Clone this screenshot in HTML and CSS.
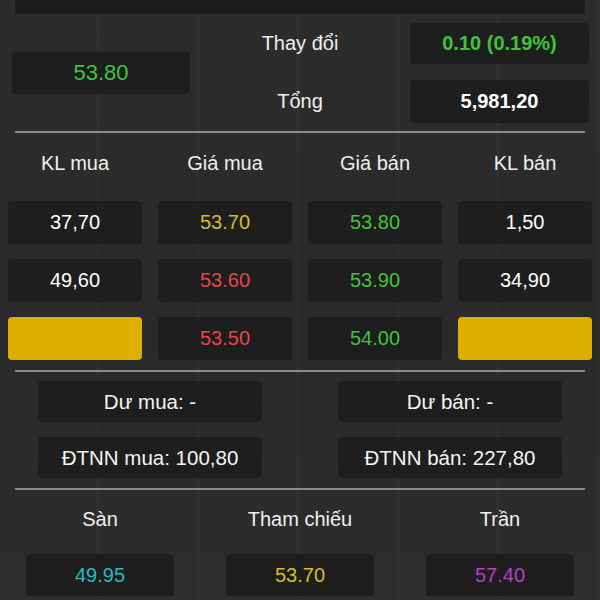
FILE: index.html
```html
<!DOCTYPE html>
<html lang="vi">
<head>
<meta charset="utf-8">
<title>Bảng giá</title>
<link rel="stylesheet" href="styles.css">
</head>
<body>
<div class="screen">
  <div class="content">
    <div class="topbar"></div>

    <div class="summary">
      <div class="box price green">53.80</div>
      <div class="label l1">Thay đổi</div>
      <div class="box strong green r1">0.10 (0.19%)</div>
      <div class="label l2">Tổng</div>
      <div class="box strong white r2">5,981,20</div>
    </div>

    <div class="divider"></div>

    <div class="book-head">
      <div>KL mua</div>
      <div>Giá mua</div>
      <div>Giá bán</div>
      <div>KL bán</div>
    </div>
    <div class="book">
      <div class="cell white">37,70</div>
      <div class="cell yellow">53.70</div>
      <div class="cell green">53.80</div>
      <div class="cell white">1,50</div>

      <div class="cell white">49,60</div>
      <div class="cell red">53.60</div>
      <div class="cell green">53.90</div>
      <div class="cell white">34,90</div>

      <div class="cell gold"></div>
      <div class="cell red">53.50</div>
      <div class="cell green">54.00</div>
      <div class="cell gold"></div>
    </div>

    <div class="divider d2"></div>

    <div class="extra">
      <div class="pill">Dư mua: -</div>
      <div class="pill">Dư bán: -</div>
      <div class="pill">ĐTNN mua: 100,80</div>
      <div class="pill">ĐTNN bán: 227,80</div>
    </div>

    <div class="divider d3"></div>

    <div class="limits-head">
      <div>Sàn</div>
      <div>Tham chiếu</div>
      <div>Trần</div>
    </div>
    <div class="limits">
      <div class="lbox teal">49.95</div>
      <div class="lbox yellow">53.70</div>
      <div class="lbox purple">57.40</div>
    </div>
  </div>
</div>
</body>
</html>
```

FILE: styles.css
```css
* { box-sizing: border-box; }

html, body {
  margin: 0;
  padding: 0;
  width: 600px;
  height: 600px;
  overflow: hidden;
  background: #2b2b2b;
}

body {
  font-family: "Liberation Sans", Arial, Helvetica, sans-serif;
  color: #f2f2f2;
}

.screen {
  width: 600px;
  height: 600px;
  overflow: hidden;
  background:
    repeating-linear-gradient(90deg, transparent 0, transparent 97px, rgba(255,255,255,0.025) 97px, rgba(255,255,255,0.025) 99px, transparent 99px, transparent 100px),
    linear-gradient(180deg, #2c2c2c 0%, #2a2a2a 60%, #2d2d2d 100%);
}

.topbar {
  height: 14px;
  margin: 0 15px;
  background: #1d1d1d;
}

/* summary */
.summary {
  display: grid;
  grid-template-columns: 178px 1fr 179px;
  grid-template-rows: 41px 43px;
  row-gap: 16px;
  padding: 9px 11px 0 12px;
}

.box {
  display: flex;
  align-items: center;
  justify-content: center;
  background: #1e1e1e;
  border-radius: 4px;
  font-size: 20px;
}
.price {
  grid-column: 1;
  grid-row: 1 / span 2;
  align-self: center;
  height: 42px;
  font-size: 22px;
}
.strong { font-weight: bold; }
.r1 { grid-column: 3; grid-row: 1; }
.r2 { grid-column: 3; grid-row: 2; }

.label {
  grid-column: 2;
  display: flex;
  align-items: center;
  justify-content: center;
  font-size: 20px;
  color: #efefef;
}
.l1 { grid-row: 1; }
.l2 { grid-row: 2; }

.divider {
  height: 2px;
  margin: 8px 15px 0;
  background: #8a8a8a;
}
.d2 { margin-top: 10px; }
.d3 { margin-top: 10px; }

/* order book */
.book-head,
.book {
  display: grid;
  grid-template-columns: repeat(4, 134px);
  column-gap: 16px;
  padding: 0 8px;
}
.book-head > div {
  height: 60px;
  line-height: 60px;
  text-align: center;
  font-size: 20px;
  color: #efefef;
}
.book {
  margin-top: 8px;
  grid-auto-rows: 43px;
  row-gap: 15px;
}
.cell {
  display: flex;
  align-items: center;
  justify-content: center;
  background: #1e1e1e;
  border-radius: 4px;
  font-size: 20px;
}
.cell.gold { background: #ddb000; }

/* extra */
.extra {
  display: grid;
  grid-template-columns: 300px 300px;
  grid-auto-rows: 41px;
  row-gap: 15px;
  margin-top: 9px;
  justify-items: center;
}
.pill {
  width: 224px;
  display: flex;
  align-items: center;
  justify-content: center;
  background: #1e1e1e;
  border-radius: 4px;
  font-size: 20.5px;
  color: #f4f4f4;
}

/* limits */
.limits-head,
.limits {
  display: grid;
  grid-template-columns: repeat(3, 200px);
  justify-items: center;
}
.limits-head > div {
  height: 58px;
  line-height: 58px;
  font-size: 20px;
  color: #efefef;
}
.limits { margin-top: 6px; }
.lbox {
  width: 148px;
  height: 42px;
  display: flex;
  align-items: center;
  justify-content: center;
  background: #1e1e1e;
  border-radius: 4px;
  font-size: 20px;
}

/* value colours */
.green { color: #3ec43a; }
.white { color: #ffffff; }
.yellow { color: #d8b936; }
.red { color: #e2474a; }
.teal { color: #2db9bd; }
.purple { color: #b63ec4; }
```
